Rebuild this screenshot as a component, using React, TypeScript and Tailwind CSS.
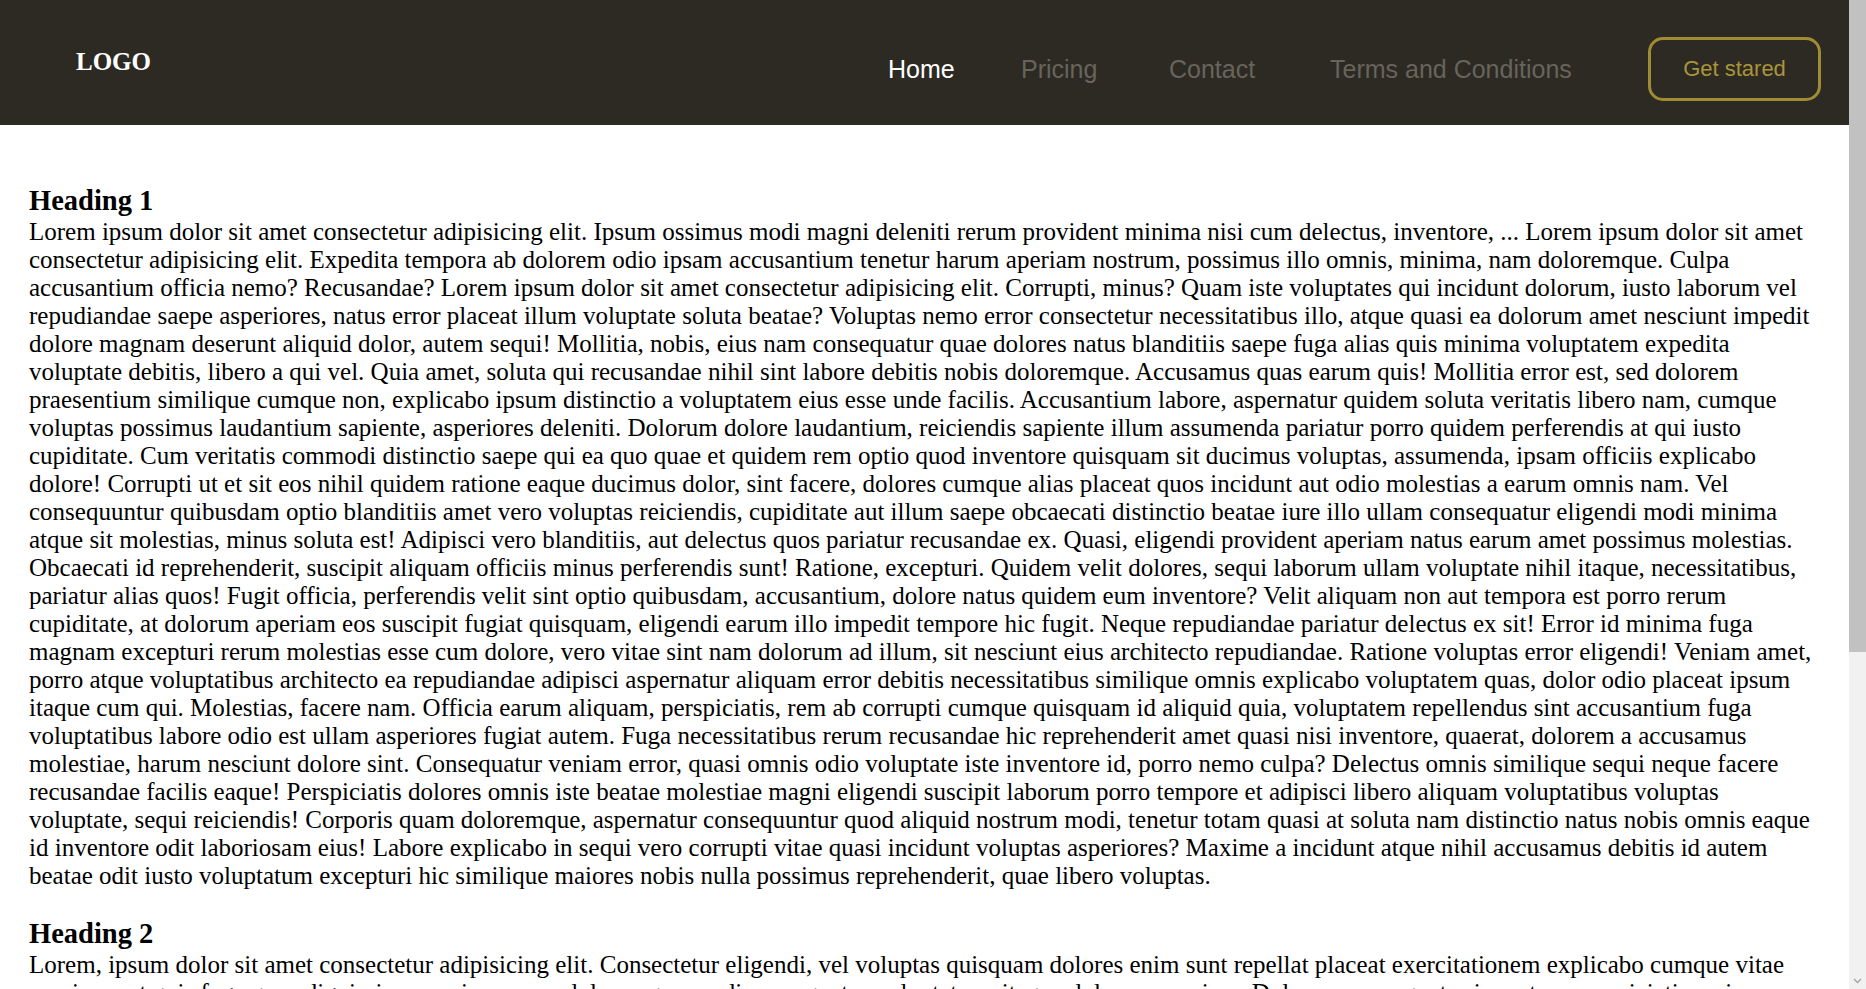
import React from "react";

const serif = "font-['Liberation_Serif','Times_New_Roman',serif]";
const comic = "font-['Comic_Sans_MS','Liberation_Sans',sans-serif]";

const para1 = [
  "Lorem ipsum dolor sit amet consectetur adipisicing elit. Ipsum ossimus modi magni deleniti rerum provident minima nisi cum delectus, inventore, ... Lorem ipsum dolor sit amet",
  "consectetur adipisicing elit. Expedita tempora ab dolorem odio ipsam accusantium tenetur harum aperiam nostrum, possimus illo omnis, minima, nam doloremque. Culpa",
  "accusantium officia nemo? Recusandae? Lorem ipsum dolor sit amet consectetur adipisicing elit. Corrupti, minus? Quam iste voluptates qui incidunt dolorum, iusto laborum vel",
  "repudiandae saepe asperiores, natus error placeat illum voluptate soluta beatae? Voluptas nemo error consectetur necessitatibus illo, atque quasi ea dolorum amet nesciunt impedit",
  "dolore magnam deserunt aliquid dolor, autem sequi! Mollitia, nobis, eius nam consequatur quae dolores natus blanditiis saepe fuga alias quis minima voluptatem expedita",
  "voluptate debitis, libero a qui vel. Quia amet, soluta qui recusandae nihil sint labore debitis nobis doloremque. Accusamus quas earum quis! Mollitia error est, sed dolorem",
  "praesentium similique cumque non, explicabo ipsum distinctio a voluptatem eius esse unde facilis. Accusantium labore, aspernatur quidem soluta veritatis libero nam, cumque",
  "voluptas possimus laudantium sapiente, asperiores deleniti. Dolorum dolore laudantium, reiciendis sapiente illum assumenda pariatur porro quidem perferendis at qui iusto",
  "cupiditate. Cum veritatis commodi distinctio saepe qui ea quo quae et quidem rem optio quod inventore quisquam sit ducimus voluptas, assumenda, ipsam officiis explicabo",
  "dolore! Corrupti ut et sit eos nihil quidem ratione eaque ducimus dolor, sint facere, dolores cumque alias placeat quos incidunt aut odio molestias a earum omnis nam. Vel",
  "consequuntur quibusdam optio blanditiis amet vero voluptas reiciendis, cupiditate aut illum saepe obcaecati distinctio beatae iure illo ullam consequatur eligendi modi minima",
  "atque sit molestias, minus soluta est! Adipisci vero blanditiis, aut delectus quos pariatur recusandae ex. Quasi, eligendi provident aperiam natus earum amet possimus molestias.",
  "Obcaecati id reprehenderit, suscipit aliquam officiis minus perferendis sunt! Ratione, excepturi. Quidem velit dolores, sequi laborum ullam voluptate nihil itaque, necessitatibus,",
  "pariatur alias quos! Fugit officia, perferendis velit sint optio quibusdam, accusantium, dolore natus quidem eum inventore? Velit aliquam non aut tempora est porro rerum",
  "cupiditate, at dolorum aperiam eos suscipit fugiat quisquam, eligendi earum illo impedit tempore hic fugit. Neque repudiandae pariatur delectus ex sit! Error id minima fuga",
  "magnam excepturi rerum molestias esse cum dolore, vero vitae sint nam dolorum ad illum, sit nesciunt eius architecto repudiandae. Ratione voluptas error eligendi! Veniam amet,",
  "porro atque voluptatibus architecto ea repudiandae adipisci aspernatur aliquam error debitis necessitatibus similique omnis explicabo voluptatem quas, dolor odio placeat ipsum",
  "itaque cum qui. Molestias, facere nam. Officia earum aliquam, perspiciatis, rem ab corrupti cumque quisquam id aliquid quia, voluptatem repellendus sint accusantium fuga",
  "voluptatibus labore odio est ullam asperiores fugiat autem. Fuga necessitatibus rerum recusandae hic reprehenderit amet quasi nisi inventore, quaerat, dolorem a accusamus",
  "molestiae, harum nesciunt dolore sint. Consequatur veniam error, quasi omnis odio voluptate iste inventore id, porro nemo culpa? Delectus omnis similique sequi neque facere",
  "recusandae facilis eaque! Perspiciatis dolores omnis iste beatae molestiae magni eligendi suscipit laborum porro tempore et adipisci libero aliquam voluptatibus voluptas",
  "voluptate, sequi reiciendis! Corporis quam doloremque, aspernatur consequuntur quod aliquid nostrum modi, tenetur totam quasi at soluta nam distinctio natus nobis omnis eaque",
  "id inventore odit laboriosam eius! Labore explicabo in sequi vero corrupti vitae quasi incidunt voluptas asperiores? Maxime a incidunt atque nihil accusamus debitis id autem",
  "beatae odit iusto voluptatum excepturi hic similique maiores nobis nulla possimus reprehenderit, quae libero voluptas.",
].join(" ");

const para2 = [
  "Lorem, ipsum dolor sit amet consectetur adipisicing elit. Consectetur eligendi, vel voluptas quisquam dolores enim sunt repellat placeat exercitationem explicabo cumque vitae",
  "maxime aut quis fuga quos dignissimos maiores nam doloremque modi consequatur voluptatum, itaque dolorem aperiam. Dolorem consequatur inventore perspiciatis maiores minus",
  "quibusdam, ipsa eveniet nostrum sequi aliquid laborum distinctio sapiente. Accusamus rerum commodi tempora officiis ipsum? Odit nihil voluptatibus quia consequuntur",
  "laboriosam beatae error fugiat, sunt asperiores illo dolorum veniam cum totam similique harum voluptas omnis modi rem possimus. Aperiam at architecto eius ut voluptatum",
  "nesciunt ea quae consectetur facilis esse, corporis dolore vero labore nam deleniti natus quod, placeat repellendus provident id reiciendis. Animi, ex. Perferendis, earum!",
  "Mollitia quas voluptas, saepe doloremque illum tenetur expedita sit magni fugit necessitatibus cupiditate quidem nulla hic ad quisquam incidunt dolor, excepturi eum.",
  "Iusto quam tempore nisi libero alias ratione, optio sint atque voluptate odio rerum dolores, suscipit maxime ipsa officia, dicta blanditiis aspernatur? Obcaecati, dolorum.",
  "Nostrum reiciendis aliquam officiis fuga assumenda, quos deserunt delectus dignissimos at ex quibusdam debitis velit eos ullam magnam animi. Voluptates quasi enim esse.",
  "Eius, sed veritatis minus accusantium nihil quae earum aut cum repellat porro, numquam ratione laudantium consequatur voluptatibus inventore ducimus eveniet error ipsum.",
  "Sunt, quidem quo. Exercitationem adipisci eum praesentium voluptatem facere nemo labore sit minima, consectetur non similique deleniti maiores perspiciatis neque.",
  "Harum, ipsa tempora nesciunt sequi dolor nam quam explicabo fugiat corporis, iure quas natus minus, accusamus rem illo ab eveniet ex totam aliquid libero odit.",
  "Praesentium fugit iste ea dolorum sed provident recusandae, beatae magni consequuntur ipsam quis odio culpa voluptas repudiandae quaerat esse, placeat amet enim.",
  "Temporibus voluptate explicabo maxime sint veniam illum fuga, ullam pariatur quod inventore autem et commodi vitae deserunt mollitia nobis corrupti.",
  "Voluptatum, reiciendis saepe. Nobis, quibusdam ducimus.",
].join(" ");

const links = [
  { label: "Home", w: "w-[64px]", active: true },
  { label: "Pricing", w: "w-[79px]", active: false },
  { label: "Contact", w: "w-[92px]", active: false },
  { label: "Terms and Conditions", w: "w-[249px]", active: false },
];

const Navbar = () => {
  return (
    <header className="flex h-[125px] shrink-0 items-center justify-between bg-[#2d2a23] pl-[76px] pr-[28px]">
      <div className={`${serif} mb-[3px] text-[25px] font-bold leading-none text-white`}>LOGO</div>
      <nav className={`${comic} mt-[12px] flex items-center gap-[69px]`}>
        {links.map((l) => (
          <a
            key={l.label}
            href="#"
            className={`${l.w} whitespace-nowrap text-[25px] leading-[30px] ${l.active ? "text-white" : "text-[#67645c]"}`}
          >
            {l.label}
          </a>
        ))}
        <button className="flex h-[64px] w-[173px] items-center justify-center rounded-[15px] border-[3px] border-[#a08c35] text-[22px] text-[#a8953b]">
          Get stared
        </button>
      </nav>
    </header>
  );
};

const Section = ({ title, text }: { title: string; text: string }) => {
  return (
    <section className="mb-[28px]">
      <h3 className="text-[28.5px] font-bold leading-[32.8px]">{title}</h3>
      <p className="text-[25px] leading-[28px]">{text}</p>
    </section>
  );
};

// browser scrollbar gutter as seen in the screenshot
const ScrollGutter = () => {
  return (
    <div className="flex w-[17px] shrink-0 flex-col bg-[#f1f1f1]">
      <div className="h-[652px] bg-[#c1c1c1]" />
      <div className="flex-1" />
      <div className="flex h-[17px] items-center justify-center">
        <svg width="9" height="6" viewBox="0 0 9 6">
          <path d="M1 1 L4.5 4.5 L8 1" fill="none" stroke="#a3a3a3" strokeWidth="1.3" />
        </svg>
      </div>
    </div>
  );
};

export default function App() {
  return (
    <div className={`${serif} flex h-screen overflow-hidden bg-white text-black`}>
      <div className="flex min-w-0 flex-1 flex-col overflow-hidden">
        <Navbar />
        {/* page content */}
        <main className="px-[29px] pt-[60px] pb-[40px]">
          <Section title="Heading 1" text={para1} />
          <Section title="Heading 2" text={para2} />
        </main>
      </div>
      <ScrollGutter />
    </div>
  );
}
